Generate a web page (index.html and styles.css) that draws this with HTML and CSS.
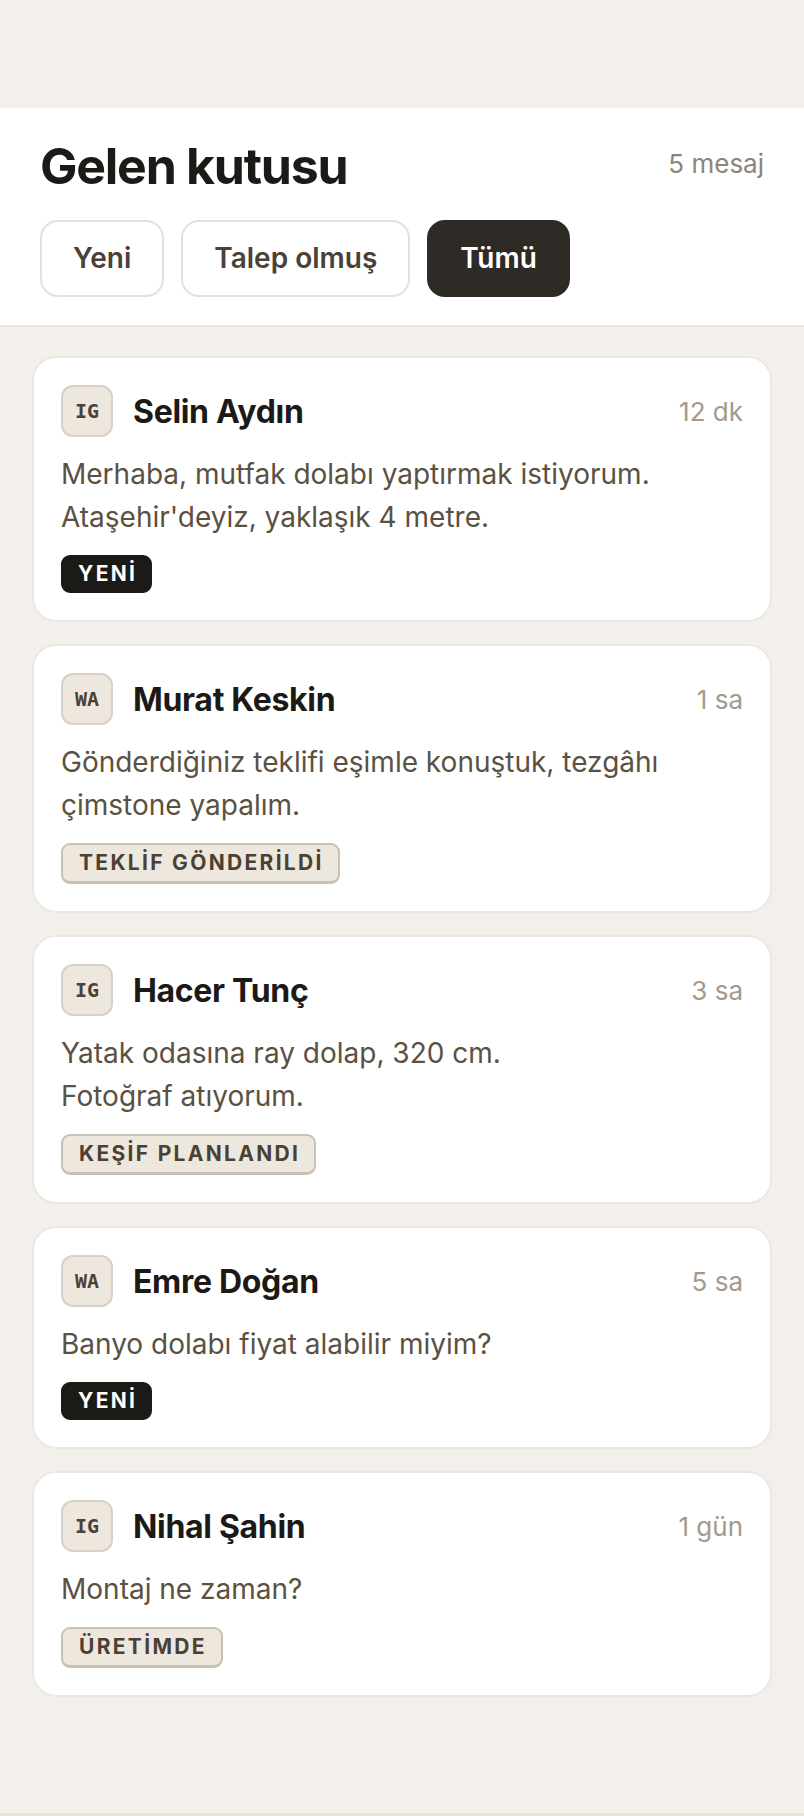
FILE: index.html
```html
<!DOCTYPE html>
<html lang="tr">
<head>
    <meta charset="UTF-8">
    <meta name="viewport" content="width=device-width, initial-scale=1.0">
    <title>Gelen kutusu</title>
    <link rel="stylesheet" href="styles.css">
</head>
<body>

    <div class="safe-top"></div>

    <header class="inbox-header">
        <div class="title-row">
            <h1>Gelen kutusu</h1>
            <span class="count">5 mesaj</span>
        </div>
        <div class="filters">
            <button class="filter">Yeni</button>
            <button class="filter">Talep olmuş</button>
            <button class="filter active">Tümü</button>
        </div>
    </header>

    <ul class="message-list">
        <li class="message">
            <div class="message-head">
                <span class="source">IG</span>
                <span class="name">Selin Aydın</span>
                <span class="time">12 dk</span>
            </div>
            <p class="text">Merhaba, mutfak dolabı yaptırmak istiyorum.<br>Ataşehir'deyiz, yaklaşık 4 metre.</p>
            <span class="badge badge-new">YENİ</span>
        </li>
        <li class="message">
            <div class="message-head">
                <span class="source">WA</span>
                <span class="name">Murat Keskin</span>
                <span class="time">1 sa</span>
            </div>
            <p class="text">Gönderdiğiniz teklifi eşimle konuştuk, tezgâhı<br>çimstone yapalım.</p>
            <span class="badge">TEKLİF GÖNDERİLDİ</span>
        </li>
        <li class="message">
            <div class="message-head">
                <span class="source">IG</span>
                <span class="name">Hacer Tunç</span>
                <span class="time">3 sa</span>
            </div>
            <p class="text">Yatak odasına ray dolap, 320 cm.<br>Fotoğraf atıyorum.</p>
            <span class="badge">KEŞİF PLANLANDI</span>
        </li>
        <li class="message">
            <div class="message-head">
                <span class="source">WA</span>
                <span class="name">Emre Doğan</span>
                <span class="time">5 sa</span>
            </div>
            <p class="text">Banyo dolabı fiyat alabilir miyim?</p>
            <span class="badge badge-new">YENİ</span>
        </li>
        <li class="message">
            <div class="message-head">
                <span class="source">IG</span>
                <span class="name">Nihal Şahin</span>
                <span class="time">1 gün</span>
            </div>
            <p class="text">Montaj ne zaman?</p>
            <span class="badge">ÜRETİMDE</span>
        </li>
    </ul>

    <div class="bottom-edge"></div>

</body>
</html>
```

FILE: styles.css
```css
* {
    box-sizing: border-box;
}
body {
    margin: 0;
    font-family: Inter, "Noto Sans", sans-serif;
    background-color: #f3f0eb;
    color: #1c1a17;
}
.safe-top {
    height: 108px;
}
.inbox-header {
    background: #fff;
    padding: 28px 40px 28px;
    border-bottom: 2px solid #e9e6e0;
}
.title-row {
    display: flex;
    justify-content: space-between;
    align-items: flex-start;
}
.title-row h1 {
    margin: 0;
    font-size: 50px;
    line-height: 60px;
    font-weight: 700;
    letter-spacing: -0.025em;
}
.count {
    margin-top: 12px;
    font-size: 26px;
    line-height: 32px;
    color: #8c8479;
}
.filters {
    display: flex;
    gap: 17px;
    margin-top: 24px;
}
.filter {
    font-family: inherit;
    font-size: 28px;
    font-weight: 600;
    line-height: 33px;
    padding: 20px 31px;
    border: 2px solid #e4e1dc;
    border-radius: 18px;
    background: #fff;
    color: #4a4137;
}
.filter.active {
    background: #2e2a25;
    border-color: #2e2a25;
    color: #fff;
}
.message-list {
    list-style-type: none;
    margin: 0;
    padding: 29px 32px 116px;
    display: flex;
    flex-direction: column;
    gap: 22px;
}
.message {
    background: #fff;
    border: 2px solid #ebe8e3;
    border-radius: 24px;
    padding: 27px;
    display: flex;
    flex-direction: column;
    align-items: flex-start;
    gap: 16px;
}
.message-head {
    display: flex;
    align-items: center;
    gap: 20px;
    width: 100%;
}
.source {
    width: 52px;
    height: 52px;
    flex-shrink: 0;
    display: flex;
    align-items: center;
    justify-content: center;
    background: #eee7de;
    border: 2px solid #d9d1c5;
    border-radius: 12px;
    font-family: "DejaVu Sans Mono", monospace;
    font-weight: 700;
    font-size: 20px;
    color: #4a4137;
}
.name {
    flex: 1;
    font-size: 32px;
    font-weight: 700;
    letter-spacing: -0.01em;
}
.time {
    font-size: 26px;
    color: #a39a8d;
}
.text {
    margin: 0;
    font-size: 28px;
    line-height: 43px;
    color: #5b5142;
}
.badge {
    font-size: 21px;
    font-weight: 700;
    line-height: 36px;
    letter-spacing: 0.11em;
    padding: 0 14px 0 16px;
    border: 2px solid #c9c1b4;
    border-bottom-width: 3px;
    border-radius: 9px;
    background: #eee7de;
    color: #4a4134;
}
.badge-new {
    line-height: 34px;
    padding: 0 13px 0 15px;
    border-bottom-width: 2px;
    background: #1c1a16;
    border-color: #1c1a16;
    color: #fff;
}
.bottom-edge {
    height: 3px;
    background: #e7e3da;
}
```
